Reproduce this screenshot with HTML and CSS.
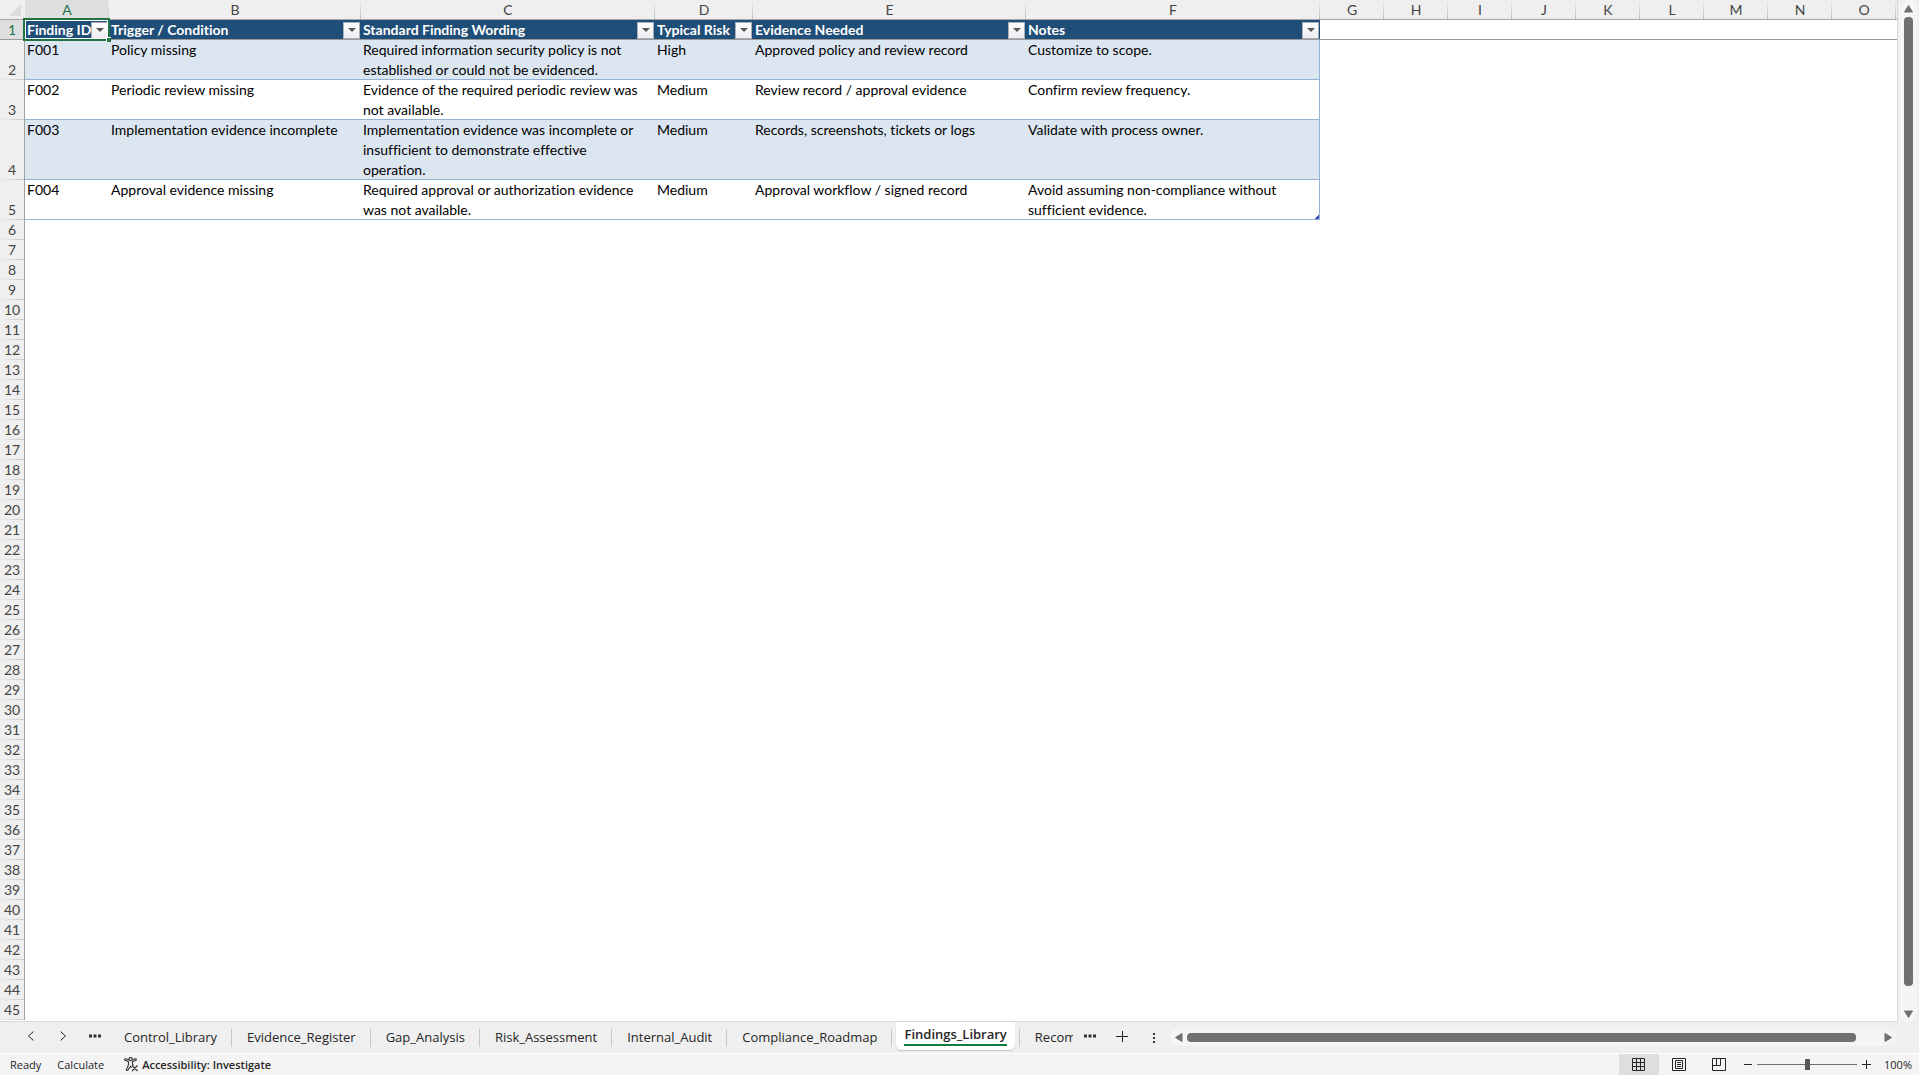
FILE: index.html
```html
<!DOCTYPE html>
<html lang="en">
<head>
<meta charset="utf-8">
<title>Findings_Library</title>
<link rel="stylesheet" href="styles.css">
</head>
<body>
<div class="workspace">
  <main class="sheet">
    <table class="grid">
      <colgroup>
        <col class="c-rows"><col class="c-a"><col class="c-b"><col class="c-c"><col class="c-d"><col class="c-e"><col class="c-f">
        <col class="c-std"><col class="c-std"><col class="c-std"><col class="c-std"><col class="c-std"><col class="c-std"><col class="c-std"><col class="c-std"><col class="c-std"><col>
      </colgroup>
      <thead>
        <tr class="letters">
          <th class="corner"><svg width="12" height="12" viewBox="0 0 12 12"><path d="M12 0v12H0z" fill="#dcdcdc"/></svg></th>
          <th class="current">A</th><th>B</th><th>C</th><th>D</th><th>E</th><th>F</th><th>G</th><th>H</th><th>I</th><th>J</th><th>K</th><th>L</th><th>M</th><th>N</th><th>O</th><th class="rest"></th>
        </tr>
      </thead>
      <tbody>
        <tr class="titles">
          <th class="num current">1</th>
          <th class="title active" scope="col"><div class="head"><span>Finding ID</span><button class="filter" aria-label="Filter Finding ID"></button></div><span class="selection"></span><span class="handle"></span></th>
          <th class="title" scope="col"><div class="head"><span>Trigger / Condition</span><button class="filter" aria-label="Filter Trigger"></button></div></th>
          <th class="title" scope="col"><div class="head"><span>Standard Finding Wording</span><button class="filter" aria-label="Filter Wording"></button></div></th>
          <th class="title" scope="col"><div class="head"><span>Typical Risk</span><button class="filter" aria-label="Filter Risk"></button></div></th>
          <th class="title" scope="col"><div class="head"><span>Evidence Needed</span><button class="filter" aria-label="Filter Evidence"></button></div></th>
          <th class="title" scope="col"><div class="head"><span>Notes</span><button class="filter" aria-label="Filter Notes"></button></div></th>
          <td class="frozen" colspan="10"></td>
        </tr>
        <tr class="data band"><th class="num">2</th><td>F001</td><td>Policy missing</td><td>Required information security policy is not established or could not be evidenced.</td><td>High</td><td>Approved policy and review record</td><td class="last">Customize to scope.</td></tr>
        <tr class="data"><th class="num">3</th><td>F002</td><td>Periodic review missing</td><td>Evidence of the required periodic review was not available.</td><td>Medium</td><td>Review record / approval evidence</td><td class="last">Confirm review frequency.</td></tr>
        <tr class="data band"><th class="num">4</th><td>F003</td><td>Implementation evidence incomplete</td><td>Implementation evidence was incomplete or insufficient to demonstrate effective operation.</td><td>Medium</td><td>Records, screenshots, tickets or logs</td><td class="last">Validate with process owner.</td></tr>
        <tr class="data"><th class="num">5</th><td>F004</td><td>Approval evidence missing</td><td>Required approval or authorization evidence was not available.</td><td>Medium</td><td>Approval workflow / signed record</td><td class="last">Avoid assuming non-compliance without sufficient evidence.<span class="table-end"></span></td></tr>
        <tr><th class="num">6</th></tr>
        <tr><th class="num">7</th></tr>
        <tr><th class="num">8</th></tr>
        <tr><th class="num">9</th></tr>
        <tr><th class="num">10</th></tr>
        <tr><th class="num">11</th></tr>
        <tr><th class="num">12</th></tr>
        <tr><th class="num">13</th></tr>
        <tr><th class="num">14</th></tr>
        <tr><th class="num">15</th></tr>
        <tr><th class="num">16</th></tr>
        <tr><th class="num">17</th></tr>
        <tr><th class="num">18</th></tr>
        <tr><th class="num">19</th></tr>
        <tr><th class="num">20</th></tr>
        <tr><th class="num">21</th></tr>
        <tr><th class="num">22</th></tr>
        <tr><th class="num">23</th></tr>
        <tr><th class="num">24</th></tr>
        <tr><th class="num">25</th></tr>
        <tr><th class="num">26</th></tr>
        <tr><th class="num">27</th></tr>
        <tr><th class="num">28</th></tr>
        <tr><th class="num">29</th></tr>
        <tr><th class="num">30</th></tr>
        <tr><th class="num">31</th></tr>
        <tr><th class="num">32</th></tr>
        <tr><th class="num">33</th></tr>
        <tr><th class="num">34</th></tr>
        <tr><th class="num">35</th></tr>
        <tr><th class="num">36</th></tr>
        <tr><th class="num">37</th></tr>
        <tr><th class="num">38</th></tr>
        <tr><th class="num">39</th></tr>
        <tr><th class="num">40</th></tr>
        <tr><th class="num">41</th></tr>
        <tr><th class="num">42</th></tr>
        <tr><th class="num">43</th></tr>
        <tr><th class="num">44</th></tr>
        <tr><th class="num">45</th></tr>
      </tbody>
    </table>
  </main>
  <div class="vscroll">
    <svg width="9" height="8" viewBox="0 0 9 8"><path d="M4.5 0.5L8.500 7H.5z" fill="#707070" stroke="#707070" stroke-linejoin="round"/></svg>
    <div class="thumb"></div>
    <svg width="9" height="8" viewBox="0 0 9 8"><path d="M4.500 7.500L8.500 1H.5z" fill="#707070" stroke="#707070" stroke-linejoin="round"/></svg>
  </div>
</div>

<nav class="tabbar" aria-label="Sheets">
  <div class="tabnav">
    <button class="icon-btn" aria-label="Previous sheet"><svg width="12" height="12" viewBox="0 0 12 12"><path d="M8.500 1.500L3.500 6l5 4.500" class="line"/></svg></button>
    <button class="icon-btn" aria-label="Next sheet"><svg width="12" height="12" viewBox="0 0 12 12"><path d="M3.500 1.500L8.500 6l-5 4.500" class="line"/></svg></button>
    <button class="icon-btn" aria-label="More sheets"><svg width="12" height="12" viewBox="0 0 12 12"><path d="M0 4.500h3v3H0zM4.500 4.500h3v3h-3zM9 4.500h3v3H9z" fill="#333"/></svg></button>
  </div>
  <button class="tab">Control_Library</button>
  <button class="tab">Evidence_Register</button>
  <button class="tab">Gap_Analysis</button>
  <button class="tab">Risk_Assessment</button>
  <button class="tab">Internal_Audit</button>
  <button class="tab">Compliance_Roadmap</button>
  <button class="tab open"><span>Findings_Library</span></button>
  <button class="tab cut"><span>Recom</span></button>
  <div class="tabtools">
    <button class="icon-btn" aria-label="More sheets"><svg width="12" height="12" viewBox="0 0 12 12"><path d="M0 4.500h3v3H0zM4.500 4.500h3v3h-3zM9 4.500h3v3H9z" fill="#333"/></svg></button>
    <button class="icon-btn" aria-label="New sheet"><svg width="12" height="12" viewBox="0 0 12 12"><path d="M0 6.500h12M6.500 1v11" class="line"/></svg></button>
    <span class="grip"><svg width="3" height="12" viewBox="0 0 3 12"><path d="M0 1h2v2H0zM0 5h2v2H0zM0 9h2v2H0z" fill="#333"/></svg></span>
  </div>
  <div class="hscroll">
    <svg width="8" height="9" viewBox="0 0 8 9"><path d="M.5 4.500L7 .5v8z" fill="#707070" stroke="#707070" stroke-linejoin="round"/></svg>
    <div class="thumb"></div>
    <svg width="8" height="9" viewBox="0 0 8 9"><path d="M7.500 4.500L1 .5v8z" fill="#707070" stroke="#707070" stroke-linejoin="round"/></svg>
  </div>
</nav>

<footer class="status">
  <span class="mode">Ready</span>
  <span class="calc">Calculate</span>
  <button class="access"><svg width="15" height="15" viewBox="0 0 15 15" fill="none" stroke="#333" stroke-width="1.100"><circle cx="6.500" cy="2" r="1.600"/><path d="M5 2.800L1.600 1.700Q.3 1.700 .8 3l3.700 1.700v3L2.300 12.500q0 1.300 1.300 1l2.900-4.300 1 1.500M8 2.800l3.400-1.100q1.300 0 .8 1.300L8.500 4.700v2.500l1 1.300M8 8.500l5.500 5.500M13.500 8.500L8 14"/></svg><span>Accessibility: Investigate</span></button>
  <div class="views">
    <button class="view on" aria-label="Normal"><svg width="14" height="14" viewBox="0 0 14 14"><path d="M.5.5h12v12H.5zM4.500.5v12M8.500.5v12M.5 4.500h12M.5 8.500h12" class="line"/></svg></button>
    <button class="view" aria-label="Page Layout"><svg width="14" height="14" viewBox="0 0 14 14"><path d="M.5.5h13v12H.5zM3.500 2.500h7v8h-7zM5 4.500h4M5 6.500h4M5 8.500h4" class="line"/></svg></button>
    <button class="view" aria-label="Page Break Preview"><svg width="14" height="14" viewBox="0 0 14 14"><path d="M.5.5h13v12H.5zM4.500.5v7M8.500.5v7M.5 7.500h8" class="line"/></svg></button>
  </div>
  <div class="zoom">
    <button class="step" aria-label="Zoom out"><svg width="9" height="9" viewBox="0 0 9 9"><path d="M0 4.500h8" class="line"/></svg></button>
    <input type="range" min="0" max="100" value="50" aria-label="Zoom">
    <button class="step" aria-label="Zoom in"><svg width="9" height="9" viewBox="0 0 9 9"><path d="M0 4.500h9M4.500 0v9" class="line"/></svg></button>
    <button class="percent">100%</button>
  </div>
</footer>
</body>
</html>
```
FILE: styles.css
```css
* { box-sizing: border-box; }

body {
  margin: 0;
  height: 100vh;
  display: flex;
  flex-direction: column;
  overflow: hidden;
  background: #efefef;
  color: #262626;
  font-family: "Open Sans", "Noto Sans", sans-serif;
}

button {
  margin: 0;
  padding: 0;
  border: 0;
  background: none;
  color: inherit;
  font: inherit;
}

svg { display: block; }
.line { fill: none; stroke: #262626; }

/* Sheet */
.workspace { flex: 1; min-height: 0; display: flex; }

.sheet {
  flex: 1;
  min-width: 0;
  overflow: hidden;
  background: #fff;
  border-right: 1px solid #d9d9d9;
  border-bottom: 1px solid #d9d9d9;
}

.grid {
  width: 100%;
  table-layout: fixed;
  border-collapse: separate;
  border-spacing: 0;
  font-family: Lato, sans-serif;
  font-size: 14px;
  font-variant-ligatures: none;
  line-height: 20px;
}

.c-rows { width: 25px; }
.c-a { width: 84px; }
.c-b { width: 252px; }
.c-c { width: 294px; }
.c-d { width: 98px; }
.c-e { width: 273px; }
.c-f { width: 294px; }
.c-std { width: 64px; }

.grid th, .grid td { padding: 0; height: 20px; }

.letters th {
  position: relative;
  background: #efefef;
  box-shadow: inset 0 -1px #a6a6a6;
  color: #444;
  font-weight: 400;
}
.letters th::after {
  content: "";
  position: absolute;
  top: 0;
  right: 0;
  width: 1px;
  height: 19px;
  background: linear-gradient(#efefef, #bdbdbd);
}
.letters .current { background: #dedede; color: #217346; }
.letters .corner::after, .letters .rest::after { display: none; }
.corner svg { margin: 0 0 0 9px; }

.num {
  background: linear-gradient(90deg, #efefef, #c8c8c8) bottom / 100% 1px no-repeat #efefef;
  border-right: 1px solid #a0a0a0;
  color: #444;
  font-weight: 400;
  text-align: center;
  vertical-align: bottom;
}
.num.current { background: #dedede; color: #217346; box-shadow: inset 0 -1px #999; }

.title {
  position: relative;
  background: #1f4e78;
  color: #fff;
  text-align: left;
  font-weight: 700;
  box-shadow: inset 0 -1px #999;
}
.head {
  display: flex;
  justify-content: space-between;
  align-items: center;
  height: 20px;
  padding: 0 1px 0 2px;
  white-space: nowrap;
}
.head span { min-width: 0; }
.filter {
  flex: none;
  width: 17px;
  height: 17px;
  display: grid;
  place-items: center;
  background: linear-gradient(#fff, #ececf2);
  border: 1px solid #a9b0b8;
}
.filter::before {
  content: "";
  border: 4px solid transparent;
  border-top-color: #595959;
  border-bottom: 0;
}
.frozen { box-shadow: inset 0 -1px #999; }

.selection {
  position: absolute;
  inset: -2px -1px -1px -2px;
  border: 2px solid #217346;
  box-shadow: inset 0 0 0 1px #fff;
  z-index: 1;
}
.handle {
  position: absolute;
  right: -2px;
  bottom: -2px;
  width: 5px;
  height: 5px;
  background: #217346;
  border: solid #fff;
  border-width: 1px 0 0 1px;
  z-index: 2;
}

.grid .data td {
  padding: 0 8px 0 2px;
  vertical-align: top;
  color: #000;
  box-shadow: inset 0 -1px #95b3d7;
}
.band td { background: #dce6f1; }
.data .last { position: relative; border-right: 1px solid #95b3d7; }
.table-end {
  position: absolute;
  right: 0;
  bottom: 1px;
  width: 4px;
  height: 4px;
  background: linear-gradient(135deg, transparent 40%, #3f51b5 40%);
}

/* Scroll bars */
.vscroll {
  width: 17px;
  margin: 0 2px 0 2px;
  padding: 5px 0 4px;
  display: flex;
  flex-direction: column;
  align-items: center;
  border-radius: 8px;
  background: #f5f5f5;
}
.thumb { flex: 1; border-radius: 4px; background: #707070; }
.vscroll .thumb { width: 9px; margin: 4px 0 24px; }

.hscroll {
  flex: 1;
  height: 17px;
  margin: 7px 22px 0 14px;
  padding: 0 5px;
  display: flex;
  align-items: center;
  border-radius: 8px;
  background: #f5f5f5;
}
.hscroll .thumb { height: 9px; margin: 0 28px 0 4px; }

/* Sheet tabs */
.tabbar {
  height: 32px;
  display: flex;
  align-items: flex-start;
  border-bottom: 1px solid #fff;
}
.tabnav { display: flex; gap: 20px; padding: 8px 8px 0 25px; }
.icon-btn { width: 12px; height: 12px; }
.tab {
  position: relative;
  flex: none;
  height: 31px;
  padding: 0 15px;
  font-size: 13px;
  line-height: 31px;
}
.tab::after {
  content: "";
  position: absolute;
  top: 7px;
  right: 0;
  width: 1px;
  height: 18px;
  background: #c6c6c6;
}
.open {
  height: 28px;
  margin: 0 4px;
  padding: 0 8px 4px;
  font-weight: 600;
  background: #fff;
  border-radius: 0 0 5px 5px;
  box-shadow: 0 1px 1px #c6c6c6;
}
.open span { display: block; height: 24px; line-height: 24px; border-bottom: 2px solid #107c41; }
.open::after { display: none; }
.cut { padding: 0 11px 0 16px; }
.cut span { display: block; width: 38px; overflow: hidden; }
.cut::after { right: auto; left: 0; }
.tabtools { display: flex; gap: 20px; padding: 8px 0 0; }
.grip { padding: 2px 0 0 5px; }

/* Status bar */
.status {
  height: 21px;
  display: flex;
  align-items: center;
  background: #f4f4f4;
  font-size: 11px;
  line-height: 20px;
}
.mode { padding: 0 16px 0 10px; }
.access { display: flex; align-items: center; gap: 3px; margin-left: 20px; font-weight: 600; }
.views { display: flex; margin-left: auto; align-self: stretch; }
.view { width: 40px; display: grid; place-items: center; }
.view.on { background: #dedede; }
.zoom { display: flex; align-items: center; padding: 0 7px 0 5px; }
.step { width: 9px; height: 9px; }
.percent { width: 28px; margin-left: 13px; text-align: right; }

input[type="range"] {
  appearance: none;
  width: 100px;
  height: 11px;
  margin: 0 5px 0 4px;
  background: linear-gradient(#707070, #707070) center / 100% 1px no-repeat;
}
input[type="range"]::-webkit-slider-thumb {
  appearance: none;
  width: 5px;
  height: 11px;
  background: #595959;
}
```
